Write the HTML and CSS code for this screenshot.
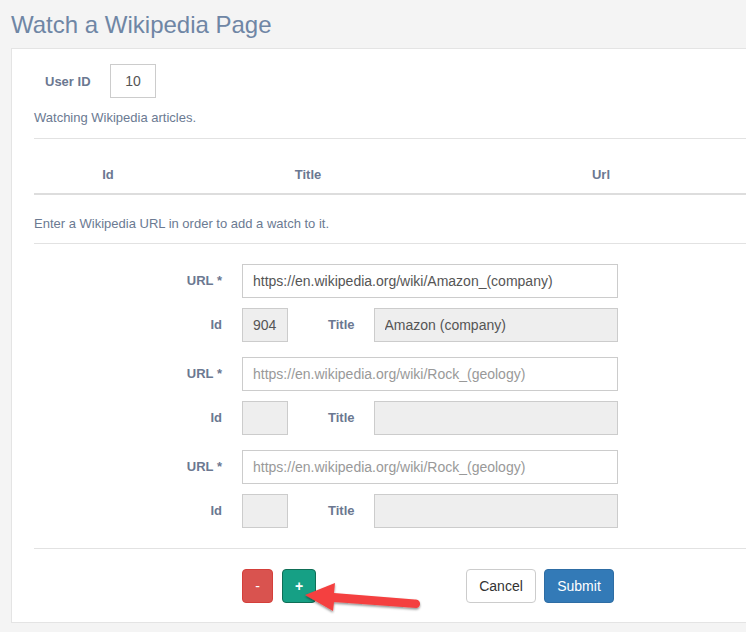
FILE: index.html
```html
<!DOCTYPE html>
<html>
<head>
<meta charset="utf-8">
<link rel="stylesheet" href="styles.css">
</head>
<body>
<h1 class="page-title">Watch a Wikipedia Page</h1>
<div class="panel">
  <div class="user-row">
    <label class="user-label">User ID</label>
    <input class="user-input" type="text" value="10">
  </div>
  <p class="help">Watching Wikipedia articles.</p>
  <div class="rule"></div>
  <div class="table-head">
    <div class="th th-id">Id</div>
    <div class="th th-title">Title</div>
    <div class="th th-url">Url</div>
  </div>
  <p class="help help-enter">Enter a Wikipedia URL in order to add a watch to it.</p>
  <div class="rule"></div>

  <div class="form">
    <div class="group">
      <div class="row">
        <label class="lbl">URL *</label>
        <input class="ctl ctl-url" type="text" value="https://en.wikipedia.org/wiki/Amazon_(company)">
      </div>
      <div class="row">
        <label class="lbl">Id</label>
        <div class="sub">
          <input class="ctl ctl-id" type="text" value="904" disabled>
          <label class="lbl lbl-title">Title</label>
          <input class="ctl ctl-title" type="text" value="Amazon (company)" disabled>
        </div>
      </div>
    </div>
    <div class="group">
      <div class="row">
        <label class="lbl">URL *</label>
        <input class="ctl ctl-url" type="text" placeholder="https://en.wikipedia.org/wiki/Rock_(geology)">
      </div>
      <div class="row">
        <label class="lbl">Id</label>
        <div class="sub">
          <input class="ctl ctl-id" type="text" disabled>
          <label class="lbl lbl-title">Title</label>
          <input class="ctl ctl-title" type="text" disabled>
        </div>
      </div>
    </div>
    <div class="group">
      <div class="row">
        <label class="lbl">URL *</label>
        <input class="ctl ctl-url" type="text" placeholder="https://en.wikipedia.org/wiki/Rock_(geology)">
      </div>
      <div class="row">
        <label class="lbl">Id</label>
        <div class="sub">
          <input class="ctl ctl-id" type="text" disabled>
          <label class="lbl lbl-title">Title</label>
          <input class="ctl ctl-title" type="text" disabled>
        </div>
      </div>
    </div>
  </div>

  <div class="rule rule-bottom"></div>

  <div class="actions">
    <button class="btn btn-red">-</button>
    <button class="btn btn-green">+</button>
    <span class="spacer"></span>
    <button class="btn btn-default">Cancel</button>
    <button class="btn btn-blue">Submit</button>
  </div>
</div>

<svg class="arrow" width="140" height="50" viewBox="300 570 140 50">
  <defs>
    <filter id="sh" x="-20%" y="-40%" width="140%" height="200%">
      <feDropShadow dx="0" dy="1.5" stdDeviation="1.2" flood-color="#000" flood-opacity="0.45"/>
    </filter>
  </defs>
  <g filter="url(#sh)" fill="#f4413f">
    <path d="M305 595 L335 583 L334 593 L415 599.5 A4.3 4.3 0 0 1 416.5 608 L334 602 L333 611 Z"/>
  </g>
</svg>
</body>
</html>
```

FILE: styles.css
```css
html, body {
  margin: 0;
  padding: 0;
}
body {
  background: #f4f4f4;
  font-family: "Liberation Sans", Arial, sans-serif;
  font-size: 14px;
  color: #333;
  overflow: hidden;
  width: 746px;
  height: 632px;
  position: relative;
}
.page-title {
  margin: 0;
  padding-left: 11px;
  font-size: 24px;
  font-weight: normal;
  line-height: 50px;
  height: 48px;
  color: #6f86a5;
}
.panel {
  margin-left: 11px;
  margin-right: -40px;
  background: #fff;
  border: 1px solid #e4e4e4;
  padding: 15px 0 19px 22px;
}
.user-row {
  display: flex;
  align-items: center;
  height: 33px;
}
.user-label {
  font-weight: bold;
  font-size: 13px;
  color: #6b7891;
  margin-left: 11px;
  width: 65px;
  padding-top: 1px;
}
.user-input {
  box-sizing: border-box;
  width: 46px;
  height: 34px;
  border: 1px solid #ccc;
  font: 14px "Liberation Sans", Arial, sans-serif;
  color: #555;
  text-align: center;
  padding: 0;
  margin: 0;
}
.help {
  margin: 0;
  font-size: 13px;
  color: #6b7a92;
  line-height: 18px;
}
.panel > .help:first-of-type {
  margin-top: 12px;
  margin-bottom: 11px;
}
.rule {
  height: 1px;
  background: #e2e2e2;
}
.table-head {
  display: grid;
  grid-template-columns: 148px 252px 334px;
  margin-top: 17px;
  border-bottom: 2px solid #dddddd;
  padding: 9px 0 8px;
  line-height: 20px;
  font-weight: bold;
  color: #6b7891;
  font-size: 13px;
}
.th {
  text-align: center;
}
.help-enter {
  margin-top: 20px !important;
  margin-bottom: 10px;
}
.form {
  padding-top: 20px;
  width: 584px;
  display: flex;
  flex-direction: column;
  gap: 16px;
}
.group {
  display: flex;
  flex-direction: column;
  gap: 11px;
}
.row {
  display: flex;
  align-items: center;
  height: 33px;
}
.lbl {
  text-align: right;
  font-weight: bold;
  font-size: 13px;
  color: #6b7891;
  flex: none;
}
.row > .lbl {
  width: 188px;
  padding-right: 20px;
}
.ctl {
  box-sizing: border-box;
  height: 34px;
  border: 1px solid #cccccc;
  font: 14px "Liberation Sans", Arial, sans-serif;
  color: #555;
  padding: 0 10px;
  margin: 0;
  background: #fff;
  border-radius: 0;
}
.ctl::placeholder {
  color: #999;
}
.ctl:disabled {
  background: #eeeeee;
  color: #555;
  -webkit-text-fill-color: #555;
  opacity: 1;
}
.ctl-url {
  width: 377px;
}
.sub {
  display: flex;
  align-items: center;
  width: 377px;
}
.ctl-id {
  width: 46px;
  padding: 0 0 0 10px;
}
.lbl-title {
  margin-left: 40px;
  margin-right: 19px;
}
.ctl-title {
  flex: 1;
}
.rule-bottom {
  margin-top: 21px;
}
.actions {
  display: flex;
  align-items: center;
  padding-top: 20px;
  padding-left: 208px;
  width: 372px;
}
.btn {
  box-sizing: border-box;
  height: 34px;
  border-radius: 4px;
  border: 1px solid transparent;
  font: 14px "Liberation Sans", Arial, sans-serif;
  padding: 0;
  margin: 0;
}
.btn-red {
  width: 31px;
  background: #d9534f;
  border-color: #d43f3a;
  color: #fff;
}
.btn-green {
  width: 34px;
  margin-left: 9px;
  background: #16a085;
  border-color: #0f6e56;
  color: #fff;
  font-weight: bold;
}
.spacer {
  flex: 1;
}
.btn-default {
  width: 70px;
  background: #fff;
  border-color: #ccc;
  color: #333;
}
.btn-blue {
  width: 70px;
  margin-left: 8px;
  background: #337ab7;
  border-color: #2e6da4;
  color: #fff;
}
.arrow {
  position: absolute;
  left: 300px;
  top: 570px;
}
```
